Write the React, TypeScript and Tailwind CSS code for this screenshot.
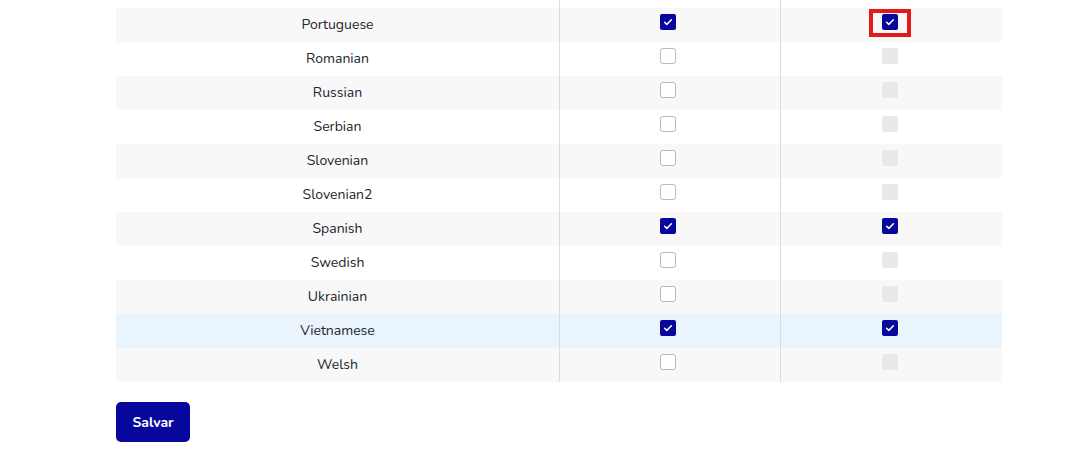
import React from "react";

type Lang = {
  name: string;
  enabled: boolean;
  published: boolean;
};

const languages: Lang[] = [
  { name: "Portuguese", enabled: true, published: true },
  { name: "Romanian", enabled: false, published: false },
  { name: "Russian", enabled: false, published: false },
  { name: "Serbian", enabled: false, published: false },
  { name: "Slovenian", enabled: false, published: false },
  { name: "Slovenian2", enabled: false, published: false },
  { name: "Spanish", enabled: true, published: true },
  { name: "Swedish", enabled: false, published: false },
  { name: "Ukrainian", enabled: false, published: false },
  { name: "Vietnamese", enabled: true, published: true },
  { name: "Welsh", enabled: false, published: false },
];

const Check = ({ checked, disabled }: { checked: boolean; disabled?: boolean }) => {
  if (checked) {
    return (
      <span className="flex h-4 w-4 items-center justify-center rounded-[2px] bg-[#07079d]">
        <svg width="12" height="12" viewBox="0 0 12 12" fill="none">
          <path d="M2.6 6.3l2.2 2.1L9.4 3.8" stroke="#fff" strokeWidth="1.5" strokeLinecap="round" strokeLinejoin="round" />
        </svg>
      </span>
    );
  }
  if (disabled) return <span className="block h-4 w-4 rounded-[2px] bg-[#e9e9e9]" />;
  return <span className="block h-4 w-4 rounded-[3px] border border-[#b9b9b9] bg-white" />;
};

export default function App() {
  return (
    <div className="min-h-[476px] bg-white font-['Nunito','Lato','Open_Sans',sans-serif] text-[14px] text-[#22252b]">
      <div className="ml-[116px] w-[886px]">
        {/* tail of the row above, scrolled out of view */}
        <div className="flex h-2">
          <div className="w-[444px] border-r border-[#dcdcdc]" />
          <div className="w-[221px] border-r border-[#dcdcdc]" />
          <div className="w-[221px]" />
        </div>

        {languages.map((lang, i) => {
          const hover = lang.name === "Vietnamese";
          const bg = hover ? "bg-[#eaf4fd]" : i % 2 === 0 ? "bg-[#f8f8f8]" : "bg-white";
          return (
            <div key={lang.name} className={`flex h-[34px] ${bg}`}>
              <div className="flex w-[444px] items-center justify-center border-r border-[#dcdcdc] pb-[2px]">
                {lang.name}
              </div>
              <div className="flex w-[221px] justify-center border-r border-[#dcdcdc] pt-[6px] pr-[4px]">
                <Check checked={lang.enabled} />
              </div>
              <div className="relative flex w-[221px] justify-center pt-[6px] pr-[3px]">
                <Check checked={lang.published} disabled={!lang.enabled} />
                {i === 0 && (
                  <span className="absolute left-[88px] top-[1px] h-[28px] w-[42px] border-4 border-[#e3191c]" />
                )}
              </div>
            </div>
          );
        })}

        <button className="mt-5 flex h-10 w-[74px] items-center justify-center rounded-[5px] bg-[#07079d] text-[14px] font-bold text-white">
          Salvar
        </button>
      </div>
    </div>
  );
}
